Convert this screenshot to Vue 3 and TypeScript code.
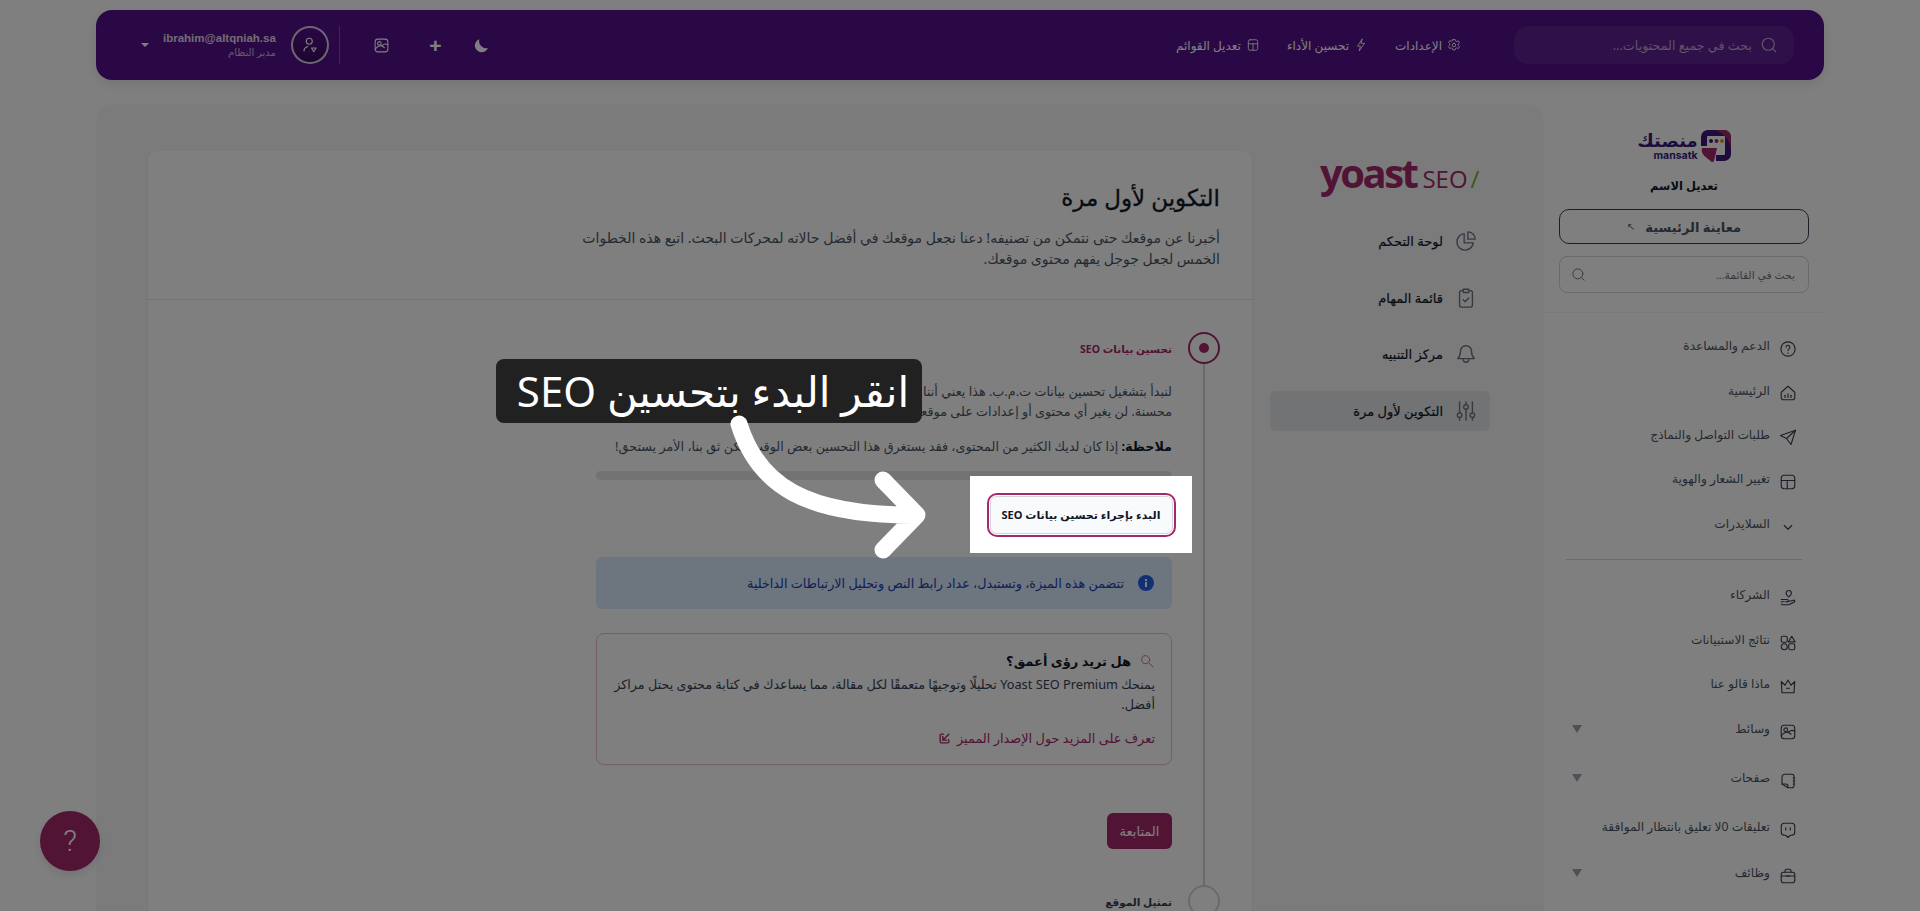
<template>
  <div class="page">
    <header class="topbar">
      <label class="top-search">
        <svg class="ico" viewBox="0 0 24 24"><circle cx="11" cy="11" r="8" /><path d="M17 17l4 4" /></svg>
        <span>بحث في جميع المحتويات...</span>
      </label>
      <nav class="top-links">
        <a v-for="link in topLinks" :key="link.label" class="top-link">
          <svg class="ico small" viewBox="0 0 24 24"><path v-for="d in icons[link.icon]" :key="d" :d="d" /></svg>
          {{ link.label }}
        </a>
      </nav>
      <div class="top-tools">
        <svg class="tool moon" viewBox="0 0 24 24"><path d="M21 15.500A10 10 0 0 1 9 3a9.500 9.500 0 1 0 12 12.500z" /></svg>
        <span class="tool plus">+</span>
        <svg class="ico tool" viewBox="0 0 24 24"><path v-for="d in icons.image" :key="d" :d="d" /></svg>
      </div>
      <div class="user">
        <div class="avatar">
          <svg class="ico" viewBox="0 0 24 24"><circle cx="11" cy="7" r="4" /><path d="M4 20c0-3 2-5 5-6M14 16h6l-3 5z" /></svg>
        </div>
        <div class="user-text">
          <strong>ibrahim@altqniah.sa</strong>
          <small>مدير النظام</small>
        </div>
        <i class="caret" />
      </div>
    </header>

    <div class="layout">
      <aside class="sidebar">
        <div class="side-head">
          <div class="brand">
            <svg class="brand-mark" viewBox="0 0 30 32">
              <path d="M3 16V7a4 4 0 0 1 4-4h16a4 4 0 0 1 4 4v17a4 4 0 0 1-4 4h-8" fill="none" stroke="#3d1a78" stroke-width="6" />
              <path d="M15 0h8a7 7 0 0 1 7 7v11q-2-12-15-18z" fill="#a4286a" />
              <path d="M1 18h15l-3 13q-1 1.500-3 .5l-7-6q-3-3-2-7.500z" fill="#a4286a" />
              <circle cx="10" cy="11" r="2" fill="#3d1a78" /><circle cx="15.500" cy="11" r="2" fill="#a4286a" /><circle cx="21" cy="11" r="2" fill="#d99a2b" />
            </svg>
            <div class="brand-name">
              <b>منصتك</b>
              <span>mansatk</span>
            </div>
          </div>
          <div class="edit-name">تعديل الاسم</div>
          <a class="preview-btn"><em>↖</em> معاينة الرئيسية</a>
          <label class="side-search">
            <span>بحث في القائمة...</span>
            <svg class="ico" viewBox="0 0 24 24"><circle cx="11" cy="11" r="8" /><path d="M17 17l4 4" /></svg>
          </label>
        </div>

        <ul class="menu first">
          <li v-for="item in menuTop" :key="item.label" class="menu-row" :style="{ height: item.h + 'px' }">
            <svg class="ico" viewBox="0 0 24 24"><path v-for="d in icons[item.icon]" :key="d" :d="d" /></svg>
            <span>{{ item.label }}</span>
          </li>
        </ul>
        <hr class="side-sep">
        <ul class="menu">
          <li v-for="item in menuBottom" :key="item.label" class="menu-row" :style="{ height: item.h + 'px' }">
            <svg class="ico" viewBox="0 0 24 24"><path v-for="d in icons[item.icon]" :key="d" :d="d" /></svg>
            <span>{{ item.label }}</span>
            <i v-if="item.more" class="more" />
          </li>
        </ul>
      </aside>

      <main class="panel">
        <div class="yoast-col">
          <div class="yoast-logo">
            <span class="y-word">yoast</span>
            <span class="y-seo">SEO</span>
            <span class="y-slash">/</span>
          </div>
          <ul class="yoast-nav">
            <li v-for="item in yoastNav" :key="item.label" class="yoast-item" :class="{ active: item.active }">
              <svg class="ico y-ico" viewBox="0 0 24 24"><path v-for="d in icons[item.icon]" :key="d" :d="d" /></svg>
              <span>{{ item.label }}</span>
            </li>
          </ul>
        </div>

        <section class="card">
          <div class="card-head">
            <h1>التكوين لأول مرة</h1>
            <p>أخبرنا عن موقعك حتى نتمكن من تصنيفه! دعنا نجعل موقعك في أفضل حالاته لمحركات البحث. اتبع هذه الخطوات الخمس لجعل جوجل يفهم محتوى موقعك.</p>
          </div>
          <div class="steps">
            <div class="step">
              <div class="rail">
                <div class="dot current"><i /></div>
                <div class="rail-line" />
              </div>
              <div class="step-body">
                <h2 class="step-title on">تحسين بيانات SEO</h2>
                <p class="para first-para">لنبدأ بتشغيل تحسين بيانات ت.م.ب. هذا يعني أننا سنفحص موقعك وننشئ قائمة بيانات بروابط داخلية<br>محسنة. لن يغير أي محتوى أو إعدادات على موقعك ولن تحتاج إلى فعل أي شيء، فقط اضغط على البدء.</p>
                <p class="para note"><b>ملاحظة:</b> إذا كان لديك الكثير من المحتوى، فقد يستغرق هذا التحسين بعض الوقت. لكن ثق بنا، الأمر يستحق!</p>
                <div class="progress" />
                <div class="info">
                  <svg class="info-ico" viewBox="0 0 20 20"><circle cx="10" cy="10" r="8" fill="#2563eb" /><path d="M9 9h2v5H9zM9 6h2v2H9z" fill="#fff" /></svg>
                  <span>تتضمن هذه الميزة، وتستبدل، عداد رابط النص وتحليل الارتباطات الداخلية</span>
                </div>
                <div class="premium">
                  <div class="premium-title">
                    <svg class="ico p-ico" viewBox="0 0 24 24"><circle cx="10" cy="10" r="6" /><path d="M15 15l6 6" /></svg>
                    <b>هل تريد رؤى أعمق؟</b>
                  </div>
                  <p>يمنحك Yoast SEO Premium تحليلًا وتوجيهًا متعمقًا لكل مقالة، مما يساعدك في كتابة محتوى يحتل مراكز أفضل.</p>
                  <a class="premium-link">تعرف على المزيد حول الإصدار المميز
                    <svg class="ico ext" viewBox="0 0 24 24"><path d="M10 4H6a2 2 0 0 0-2 2v12a2 2 0 0 0 2 2h12a2 2 0 0 0 2-2v-4M20 4L9 15M9 8v7h7" /></svg>
                  </a>
                </div>
                <button class="next" type="button">المتابعة</button>
              </div>
            </div>
            <div class="step">
              <div class="rail"><div class="dot" /></div>
              <div class="step-body">
                <h2 class="step-title">تمثيل الموقع</h2>
              </div>
            </div>
          </div>
        </section>
      </main>
    </div>

    <button class="help" type="button">?</button>

    <!-- tour overlay -->
    <div class="overlay" />
    <div class="spot">
      <button class="start" type="button">البدء بإجراء تحسين بيانات SEO</button>
    </div>
    <div class="callout">انقر البدء بتحسين SEO</div>
    <svg class="tour-arrow" viewBox="0 0 210 170">
      <path d="M9 14C28 75 75 106 187 105M153 70l34 35-34 35" />
    </svg>
  </div>
</template>

<script setup lang="ts">
type IconName = string

interface MenuItem {
  label: string
  icon: IconName
  h: number
  more?: boolean
}

const icons: Record<IconName, string[]> = {
  gear: ['M10 2.500h4l.6 2.700 2.300 1 2.400-1.400 2 3.400-2 1.900v2.800l2 1.900-2 3.400-2.400-1.400-2.300 1-.6 2.700h-4l-.6-2.700-2.300-1-2.400 1.400-2-3.400 2-1.900V9.600l-2-1.900 2-3.400 2.400 1.400 2.300-1z', 'M12 9a3 3 0 1 0 0 6 3 3 0 0 0 0-6z'],
  bolt: ['M14 2L6 14h5l-2 8 9-13h-5.500z'],
  table: ['M7 3h10a3 3 0 0 1 3 3v12a3 3 0 0 1-3 3H7a3 3 0 0 1-3-3V6a3 3 0 0 1 3-3z', 'M4 10h16', 'M12 10v11'],
  help: ['M12 2.500a9.500 9.500 0 1 0 0 19 9.500 9.500 0 0 0 0-19z', 'M9.500 9.500a2.500 2.500 0 1 1 4 2c-1 .7-1.500 1.300-1.500 2.500', 'M12 17v.5'],
  home: ['M3 11l9-8 9 8v7a3 3 0 0 1-3 3H6a3 3 0 0 1-3-3z', 'M8 15v3', 'M12 13v5', 'M16 15v3'],
  send: ['M22 3L2 10l8 4 6 8z', 'M22 3L10 14'],
  layout: ['M7 3h10a4 4 0 0 1 4 4v10a4 4 0 0 1-4 4H7a4 4 0 0 1-4-4V7a4 4 0 0 1 4-4z', 'M3 10h18', 'M11 10v11'],
  chevron: ['M7 10l5 5 5-5'],
  partners: ['M13 2a3.500 3.500 0 0 0-3.500 3.500c0 2 2 3.500 3.500 5 1.500-1.500 3.500-3 3.500-5A3.500 3.500 0 0 0 13 2z', 'M3 14h8c2 0 2 3 0 3H8', 'M11 17l8-2c2-.5 3 1.500 1 2.500l-7 3.500H5l-2-1', 'M3 17h3'],
  shapes: ['M5 3h4a2 2 0 0 1 2 2v4a2 2 0 0 1-2 2H5a2 2 0 0 1-2-2V5a2 2 0 0 1 2-2z', 'M17 3l4.500 7.500h-9z', 'M7 13a4 4 0 1 0 0 8 4 4 0 0 0 0-8z', 'M15 13h4a2 2 0 0 1 2 2v4a2 2 0 0 1-2 2h-4a2 2 0 0 1-2-2v-4a2 2 0 0 1 2-2z'],
  crown: ['M3 6l5 5 4-7 4 7 5-5-1 15H4z', 'M10 15h4'],
  image: ['M7 3h10a4 4 0 0 1 4 4v10a4 4 0 0 1-4 4H7a4 4 0 0 1-4-4V7a4 4 0 0 1 4-4z', 'M9 6.500a2.500 2.500 0 1 0 0 5 2.500 2.500 0 0 0 0-5z', 'M3 17c5-6 9-6 13-2M13 12c2-2 5-3 8-1'],
  notes: ['M8 3h9a3 3 0 0 1 3 3v12a3 3 0 0 1-3 3h-5l-8-5V7a4 4 0 0 1 4-4z', 'M21 8h-2', 'M21 12h-2', 'M21 16h-2', 'M4 16h5a3 3 0 0 1 3 3v2'],
  chat: ['M7 3h10a4 4 0 0 1 4 4v8a4 4 0 0 1-4 4h-2l-3 3-3-3H7a4 4 0 0 1-4-4V7a4 4 0 0 1 4-4z', 'M9 9v3', 'M15 9v3'],
  case: ['M6 7h12a3 3 0 0 1 3 3v8a3 3 0 0 1-3 3H6a3 3 0 0 1-3-3v-8a3 3 0 0 1 3-3z', 'M8 7V5a2 2 0 0 1 2-2h4a2 2 0 0 1 2 2v2', 'M3 12h18', 'M10 12h4'],
  pie: ['M10 4a9 9 0 1 0 10 10H10z', 'M14 2a8 8 0 0 1 8 8h-8z'],
  clipboard: ['M8 4H7a2 2 0 0 0-2 2v14a2 2 0 0 0 2 2h10a2 2 0 0 0 2-2V6a2 2 0 0 0-2-2h-1', 'M9 2.500h6V6H9z', 'M9 14l2 2 4-4'],
  bell: ['M6 9a6 6 0 1 1 12 0c0 4 1 6 3 8H3c2-2 3-4 3-8z', 'M9 18a3 3 0 0 0 6 0'],
  sliders: ['M5 2v12', 'M5 19v3', 'M12 2v3', 'M12 10v12', 'M19 2v12', 'M19 19v3', 'M5 14a2.500 2.500 0 1 0 0 5 2.500 2.500 0 0 0 0-5z', 'M12 5a2.500 2.500 0 1 0 0 5 2.500 2.500 0 0 0 0-5z', 'M19 14a2.500 2.500 0 1 0 0 5 2.500 2.500 0 0 0 0-5z'],
}

const topLinks = [
  { label: 'الإعدادات', icon: 'gear' },
  { label: 'تحسين الأداء', icon: 'bolt' },
  { label: 'تعديل القوائم', icon: 'table' },
]

const menuTop: MenuItem[] = [
  { label: 'الدعم والمساعدة', icon: 'help', h: 45 },
  { label: 'الرئيسية', icon: 'home', h: 44 },
  { label: 'طلبات التواصل والنماذج', icon: 'send', h: 44 },
  { label: 'تغيير الشعار والهوية', icon: 'layout', h: 45 },
  { label: 'السلايدرات', icon: 'chevron', h: 45 },
]

const menuBottom: MenuItem[] = [
  { label: 'الشركاء', icon: 'partners', h: 45 },
  { label: 'نتائج الاستبيانات', icon: 'shapes', h: 45 },
  { label: 'ماذا قالو عنا', icon: 'crown', h: 42 },
  { label: 'وسائط', icon: 'image', h: 49, more: true },
  { label: 'صفحات', icon: 'notes', h: 49, more: true },
  { label: 'تعليقات 0لا تعليق بانتظار الموافقة', icon: 'chat', h: 49 },
  { label: 'وظائف', icon: 'case', h: 43, more: true },
]

const yoastNav = [
  { label: 'لوحة التحكم', icon: 'pie', active: false },
  { label: 'قائمة المهام', icon: 'clipboard', active: false },
  { label: 'مركز التنبيه', icon: 'bell', active: false },
  { label: 'التكوين لأول مرة', icon: 'sliders', active: true },
]
</script>

<style>
html, body {
  margin: 0;
  background: #fff;
  overflow: hidden;
}
</style>

<style scoped>
* {
  box-sizing: border-box;
}

.page {
  position: relative;
  height: 911px;
  overflow: hidden;
  direction: rtl;
  background: #fff;
  padding-top: 10px;
  font-family: "Noto Sans", "DejaVu Sans", sans-serif;
  color: #1f2937;
}

.ico {
  width: 18px;
  height: 18px;
  flex: none;
  fill: none;
  stroke: currentColor;
  stroke-width: 1.500;
  stroke-linecap: round;
  stroke-linejoin: round;
}

.ico.small {
  width: 14px;
  height: 14px;
}

/* top bar */
.topbar {
  display: flex;
  align-items: center;
  height: 70px;
  margin: 0 96px;
  padding: 0 30px 0 45px;
  border-radius: 16px;
  background: #54108a;
  box-shadow: 0 4px 12px rgba(0, 0, 0, .1);
  color: #fff;
}

.top-search {
  display: flex;
  align-items: center;
  gap: 8px;
  width: 280px;
  height: 38px;
  padding: 0 16px;
  border-radius: 14px;
  background: rgba(255, 255, 255, .07);
  font-size: 12.700px;
  color: rgba(255, 255, 255, .6);
}

.top-links {
  display: flex;
  gap: 27px;
  margin-right: 53px;
}

.top-link {
  display: flex;
  align-items: center;
  gap: 5px;
  font-size: 12px;
  color: #fff;
}

.top-tools {
  display: flex;
  align-items: center;
  gap: 37px;
  margin-right: auto;
  margin-left: 33px;
}

.tool {
  width: 17px;
  height: 17px;
}

.moon {
  margin-left: -8px;
  fill: #fff;
}

.plus {
  font: 700 21px/17px "Liberation Sans", sans-serif;
  text-align: center;
}

.user {
  display: flex;
  align-items: center;
  height: 38px;
  padding-right: 10px;
  border-right: 1px solid rgba(255, 255, 255, .25);
}

.avatar {
  display: grid;
  place-items: center;
  width: 38px;
  height: 38px;
  border: 2px solid rgba(255, 255, 255, .8);
  border-radius: 50%;
  background: linear-gradient(#54108a, #3a0a60);
}

.user-text {
  display: flex;
  flex-direction: column;
  margin-right: 15px;
  text-align: right;
  line-height: 14px;
}

.user-text strong {
  font: 700 11.500px/14px "Liberation Sans", sans-serif;
  color: rgba(255, 255, 255, .85);
}

.user-text small {
  font-size: 10px;
  color: rgba(255, 255, 255, .7);
}

.caret {
  width: 0;
  height: 0;
  margin-right: 14px;
  border: 4px solid transparent;
  border-top: 4px solid #fff;
  border-bottom: 0;
}

/* page columns */
.layout {
  display: flex;
  margin: 24px 96px 0;
}

.sidebar {
  width: 280px;
  flex: none;
  padding-top: 26px;
}

.side-head {
  display: flex;
  flex-direction: column;
  align-items: center;
  height: 183px;
  padding: 0 15px;
  border-bottom: 1px solid #f3f4f6;
}

.brand {
  display: flex;
  gap: 3px;
  height: 32px;
}

.brand-mark {
  width: 30px;
  height: 32px;
}

.brand-name {
  display: flex;
  flex-direction: column;
  align-items: flex-start;
  color: #3d1a78;
}

.brand-name b {
  font-size: 18px;
  line-height: 20px;
}

.brand-name span {
  direction: ltr;
  font: 700 10.500px/11px "Inter", sans-serif;
}

.edit-name {
  margin-top: 15px;
  font-size: 11.500px;
  font-weight: 700;
  line-height: 18px;
  color: #111827;
}

.preview-btn {
  display: flex;
  align-items: center;
  justify-content: center;
  gap: 10px;
  width: 100%;
  height: 35px;
  margin-top: 14px;
  border: 1px solid #374151;
  border-radius: 10px;
  font-size: 13px;
  font-weight: 700;
  color: #4b5563;
}

.preview-btn em {
  order: 1;
  font: normal 10px "DejaVu Sans", sans-serif;
}

.side-search {
  display: flex;
  align-items: center;
  justify-content: space-between;
  width: 100%;
  height: 37px;
  margin-top: 12px;
  padding: 0 13px 0 11px;
  border: 1px solid #d1d5db;
  border-radius: 8px;
  font-size: 10.800px;
  color: #6b7280;
}

.side-search .ico {
  width: 15px;
  height: 15px;
}

.menu {
  margin: 0;
  padding: 0;
  list-style: none;
}

.menu.first {
  margin-top: 13px;
}

.menu-row {
  display: flex;
  align-items: center;
  gap: 9px;
  padding: 0 27px 0 28px;
  font-size: 12.200px;
  color: #4b5563;
}

.menu-row .ico {
  width: 18px;
  height: 18px;
  color: #374151;
}

.menu-row span {
  padding-bottom: 6px;
}

.more {
  width: 0;
  height: 0;
  margin-right: auto;
  margin-bottom: 6px;
  border-style: solid;
  border-width: 8px 5px 0;
  border-color: #9ca3af transparent transparent;
}

.side-sep {
  margin: 10px 22px 15px;
  border: 0;
  border-top: 1px solid #d1d5db;
}

.panel {
  display: flex;
  flex: 1;
  gap: 18px;
  height: 820px;
  padding: 47px 54px 0 52px;
  border-radius: 16px 16px 0 0;
  background: #f6f7f9;
}

/* yoast nav */
.yoast-col {
  width: 220px;
  flex: none;
}

.yoast-logo {
  display: flex;
  align-items: baseline;
  justify-content: flex-start;
  direction: ltr;
  height: 44px;
  margin-top: 1px;
  padding-left: 50px;
  white-space: nowrap;
  color: #a4286a;
}

.y-word {
  font: 700 40px/42px "Open Sans", sans-serif;
  letter-spacing: -2.500px;
}

.y-seo {
  margin-left: 6px;
  font: 400 24px/42px "Open Sans", sans-serif;
}

.y-slash {
  margin-left: 3px;
  font: 400 24px/42px "Open Sans", sans-serif;
  color: #77b227;
}

.yoast-nav {
  margin: 25px 0 0;
  padding: 0;
  list-style: none;
}

.yoast-item {
  display: flex;
  align-items: center;
  gap: 12px;
  height: 40px;
  margin-bottom: 16.500px;
  padding: 0 13px;
  border-radius: 6px;
  font-size: 13px;
  -webkit-text-stroke: .2px currentColor;
  color: #111827;
}

.yoast-item.active {
  background: #e5e7eb;
}

.y-ico {
  width: 22px;
  height: 22px;
  color: #6b7280;
}

/* main card */
.card {
  flex: 1;
  height: 800px;
  border-radius: 8px;
  background: #fff;
  box-shadow: 0 1px 3px rgba(0, 0, 0, .1);
}

.card-head {
  height: 149px;
  padding: 31px 32px 0;
  border-bottom: 1px solid #e5e7eb;
}

.card-head h1 {
  margin: 0;
  font-size: 23px;
  font-weight: 400;
  -webkit-text-stroke: .3px currentColor;
  line-height: 30px;
  color: #111827;
}

.card-head p {
  max-width: 645px;
  margin: 15px 0 0;
  font-size: 14px;
  line-height: 21px;
  color: #4b5563;
}

.steps {
  padding: 32px 32px 0;
}

.step {
  display: flex;
  gap: 16px;
}

.rail {
  display: flex;
  flex-direction: column;
  align-items: center;
  width: 32px;
  flex: none;
}

.dot {
  display: grid;
  flex: none;
  place-items: center;
  width: 32px;
  height: 32px;
  border: 2px solid #d1d5db;
  border-radius: 50%;
}

.dot.current {
  border-color: #a4286a;
}

.dot.current i {
  width: 10px;
  height: 10px;
  border-radius: 50%;
  background: #a4286a;
}

.rail-line {
  width: 2px;
  flex: 1;
  background: #d1d5db;
}

.step-body {
  width: 576px;
}

.step-title {
  margin: 8px 0 0;
  font-size: 10.500px;
  font-weight: 700;
  line-height: 18px;
  color: #374151;
}

.step-title.on {
  color: #a4286a;
}

.para {
  margin: 0;
  font-size: 12.750px;
  line-height: 20px;
  color: #4b5563;
}

.first-para {
  margin-top: 23px;
}

.note {
  margin-top: 15px;
}

.note b {
  color: #111827;
}

.progress {
  height: 9px;
  margin-top: 15px;
  border-radius: 5px;
  background: #e5e7eb;
}

.info {
  display: flex;
  align-items: center;
  gap: 12px;
  height: 52px;
  margin-top: 77px;
  padding: 0 16px;
  border-radius: 6px;
  background: #dbeafe;
  font-size: 12.750px;
  color: #1e40af;
}

.info-ico {
  width: 20px;
  height: 20px;
  flex: none;
}

.premium {
  height: 132px;
  margin-top: 24px;
  padding: 17px 16px 0;
  border: 1px solid #e9bdd3;
  border-radius: 8px;
  box-shadow: 0 1px 2px rgba(0, 0, 0, .05);
}

.premium-title {
  display: flex;
  align-items: center;
  gap: 8px;
  font-size: 13px;
  line-height: 20px;
  color: #111827;
}

.p-ico {
  width: 16px;
  height: 16px;
  color: #c86f9f;
}

.premium p {
  margin: 3px 0 0;
  font-size: 12.750px;
  line-height: 20px;
  color: #374151;
}

.premium-link {
  display: flex;
  align-items: center;
  gap: 6px;
  margin-top: 15px;
  font-size: 12.900px;
  color: #a4286a;
}

.ext {
  width: 13px;
  height: 13px;
  stroke-width: 2.500;
}

.next {
  display: block;
  width: 65px;
  height: 36px;
  margin: 48px 0 36px;
  padding: 0;
  border: 0;
  border-radius: 6px;
  background: #a4286a;
  font: 500 13px "Noto Sans", "DejaVu Sans", sans-serif;
  color: #fff;
}

.help {
  position: absolute;
  left: 40px;
  bottom: 40px;
  width: 60px;
  height: 60px;
  padding: 0;
  border: 0;
  border-radius: 50%;
  background: #a4286a;
  box-shadow: 0 4px 8px rgba(0, 0, 0, .1);
  font: 300 30px/60px Roboto, sans-serif;
  color: #fff;
}

/* tour */
.overlay {
  position: absolute;
  inset: 0;
  background: rgba(0, 0, 0, .5);
}

.spot {
  position: absolute;
  left: 970px;
  top: 476px;
  display: grid;
  place-items: center;
  width: 222px;
  height: 77px;
  background: #fff;
}

.start {
  width: 183px;
  height: 38px;
  padding: 0;
  border: 1px solid #d1d5db;
  border-radius: 7px;
  outline: 2px solid #a4286a;
  outline-offset: 1px;
  background: #f9fafb;
  font: 700 11px "Noto Sans", "DejaVu Sans", sans-serif;
  color: #111827;
}

.callout {
  position: absolute;
  left: 496px;
  top: 359px;
  display: flex;
  align-items: center;
  justify-content: center;
  width: 426px;
  height: 64px;
  padding-left: 8px;
  border-radius: 8px;
  background: #212121;
  font-size: 42px;
  line-height: 64px;
  white-space: nowrap;
  color: #fff;
}

.tour-arrow {
  position: absolute;
  left: 730px;
  top: 410px;
  width: 210px;
  height: 170px;
  fill: none;
  stroke: #fff;
  stroke-width: 17;
  stroke-linecap: round;
  stroke-linejoin: round;
}
</style>
